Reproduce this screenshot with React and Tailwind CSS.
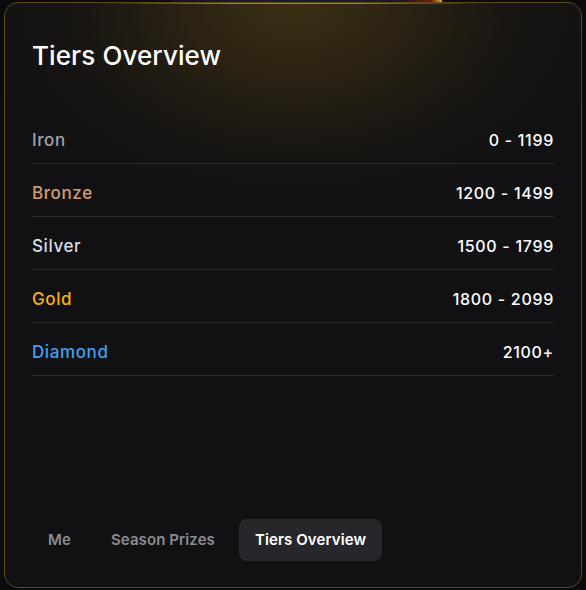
import React from "react";

const tiers = [
  { name: "Iron", range: "0 - 1199", color: "text-[#9ca3af]" },
  { name: "Bronze", range: "1200 - 1499", color: "text-[#d29f70]" },
  { name: "Silver", range: "1500 - 1799", color: "text-[#d9dde6]" },
  { name: "Gold", range: "1800 - 2099", color: "text-[#fbb014]" },
  { name: "Diamond", range: "2100+", color: "text-[#40a0f6]" },
];

export default function App() {
  return (
    <div
      className="relative w-[586px] h-[590px] bg-[#0b0b0c] px-[4px] pt-[2px] pb-[2px]"
      style={{ fontFamily: "Inter, 'Noto Sans', sans-serif" }}
    >
      <div className="absolute top-0 left-[172px] w-[270px] h-[3px] bg-[linear-gradient(90deg,#15161c,#1c1f2a_40%,#181a22_85%,#7a1a10_96%,#e0b020)]" />
      <div className="relative h-full rounded-[14px] border border-[#5e4719] bg-[#111113] overflow-hidden flex flex-col">
        <div className="absolute inset-0 pointer-events-none bg-[radial-gradient(ellipse_400px_270px_at_290px_0px,rgba(120,88,20,0.42),rgba(60,44,14,0.16)_55%,transparent_82%)]" />
        <div className="absolute top-0 left-[100px] right-[100px] h-px bg-[linear-gradient(90deg,transparent,#b08420_35%,#b08420_65%,transparent)]" />
        <div className="relative flex flex-col flex-1 px-[27px] pt-[37px] pb-[26px]">
          <h1 className="text-[26px] leading-[32px] font-medium text-white tracking-[0.1px]">
            Tiers Overview
          </h1>
          <div className="mt-[39px] flex flex-col">
            {tiers.map((t) => (
              <div
                key={t.name}
                className="flex items-center justify-between pt-[17px] pb-[11px] border-b border-[#2a2a2e]"
              >
                <span className={`text-[17px] leading-[24px] font-medium tracking-[0.6px] ${t.color}`}>
                  {t.name}
                </span>
                <span className="text-[16px] leading-[24px] font-medium tracking-[0.7px] text-white">
                  {t.range}
                </span>
              </div>
            ))}
          </div>
          <div className="mt-auto flex items-center gap-2">
            <button className="px-4 py-[11px] rounded-lg text-[15px] leading-[20px] font-semibold tracking-[0.1px] text-[#8b8b92]">
              Me
            </button>
            <button className="px-4 py-[11px] rounded-lg text-[15px] leading-[20px] font-semibold tracking-[0.1px] text-[#8b8b92]">
              Season Prizes
            </button>
            <button className="px-4 py-[11px] rounded-lg text-[15px] leading-[20px] font-semibold tracking-[0.1px] text-white bg-[#27272b]">
              Tiers Overview
            </button>
          </div>
        </div>
      </div>
    </div>
  );
}
